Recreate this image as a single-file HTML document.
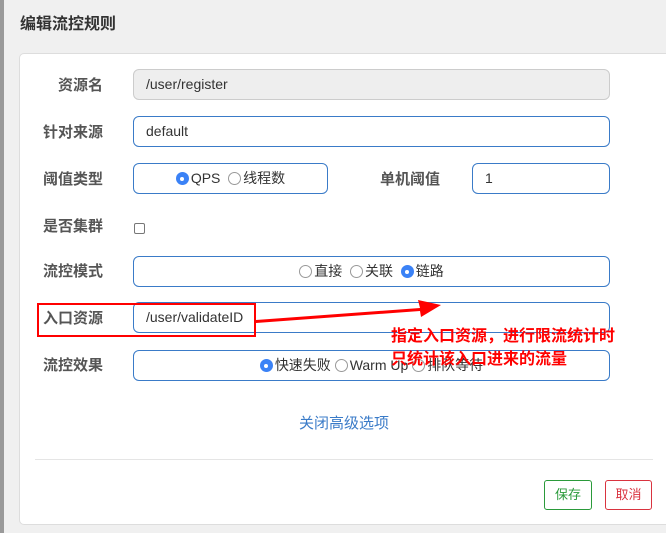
<!DOCTYPE html><html><head><meta charset="utf-8"><style>
*{box-sizing:border-box;margin:0;padding:0}
body{width:666px;height:533px;background:#f0f0f0;font-family:"Liberation Sans","Noto Sans CJK SC",sans-serif;position:relative;overflow:hidden;color:#333;font-size:14px}
.strip{position:absolute;left:0;top:0;width:4px;height:533px;background:#9a9a9a}
.title{position:absolute;left:20px;top:10px;font-size:16px;font-weight:bold;color:#333}
.card{position:absolute;left:19px;top:53px;width:660px;height:472px;background:#fff;border:1px solid #ddd;border-radius:5px}
.lbl{position:absolute;font-size:15px;font-weight:bold;color:#555;}
.inp{position:absolute;border:1px solid #3a7bc8;border-radius:6px;height:31px;font-size:14px;line-height:29px;padding-left:12px;color:#333;background:#fff}
.ro{background:#eee;border-color:#ccc}
.rad{display:inline-block;width:13px;height:13px;border:1px solid #999;border-radius:50%;vertical-align:-2px;margin-right:2px;background:#fff}
.on{background:#3b82f6;border-color:#3b82f6;position:relative}
.on::after{content:"";position:absolute;left:3.5px;top:3.5px;width:4px;height:4px;border-radius:50%;background:#fff}
.c{text-align:center;padding:0}
.btn{position:absolute;height:30px;width:48px;border:1px solid;border-radius:3px;font-size:13px;line-height:28px;text-align:center;background:#fff}
.red{position:absolute;color:#f00;font-size:16px;font-weight:bold}
</style></head><body>
<div class="strip"></div>
<div class="title">编辑流控规则</div>
<div class="card"></div>
<div class="lbl" style="left:58px;top:74px">资源名</div>
<div class="inp ro" style="left:133px;top:69px;width:477px">/user/register</div>
<div class="lbl" style="left:43px;top:121px">针对来源</div>
<div class="inp" style="left:133px;top:116px;width:477px">default</div>
<div class="lbl" style="left:43px;top:168px">阈值类型</div>
<div class="inp c" style="left:133px;top:163px;width:195px"><span class="rad on"></span>QPS &nbsp;<span class="rad"></span>线程数</div>
<div class="lbl" style="left:380px;top:168px">单机阈值</div>
<div class="inp" style="left:472px;top:163px;width:138px">1</div>
<div class="lbl" style="left:43px;top:215px">是否集群</div>
<div style="position:absolute;left:134px;top:223px;width:11px;height:11px;border:1px solid #777;border-radius:2px"></div>
<div class="lbl" style="left:43px;top:260px">流控模式</div>
<div class="inp c" style="left:133px;top:256px;width:477px"><span class="rad"></span>直接 &nbsp;<span class="rad"></span>关联 &nbsp;<span class="rad on"></span>链路</div>
<div class="lbl" style="left:43px;top:307px">入口资源</div>
<div class="inp" style="left:133px;top:302px;width:477px">/user/validateID</div>
<div class="lbl" style="left:43px;top:354px">流控效果</div>
<div class="inp c" style="left:133px;top:350px;width:477px"><span class="rad on"></span>快速失败 <span class="rad"></span>Warm Up <span class="rad"></span>排队等待</div>
<div style="position:absolute;left:0;width:666px;top:412px;text-align:center;font-size:15px;color:#3a7bc8;padding-left:22px">关闭高级选项</div>
<div style="position:absolute;left:35px;top:459px;width:618px;height:1px;background:#e5e5e5"></div>
<div class="btn" style="left:544px;top:480px;color:#2a9a3a;border-color:#2a9a3a">保存</div>
<div class="btn" style="left:605px;top:480px;width:47px;color:#d9333f;border-color:#d9333f">取消</div>
<div style="position:absolute;left:37px;top:303px;width:219px;height:34px;border:2px solid #f00"></div>
<svg style="position:absolute;left:0;top:0" width="666" height="533"><path d="M256 320 L420 308 L418 300 L441 305 L421 317 L420 311 L256 323Z" fill="#f00"/></svg>
<div class="red" style="left:391px;top:322px">指定入口资源，进行限流统计时</div>
<div class="red" style="left:391px;top:345px">只统计该入口进来的流量</div>
</body></html>
